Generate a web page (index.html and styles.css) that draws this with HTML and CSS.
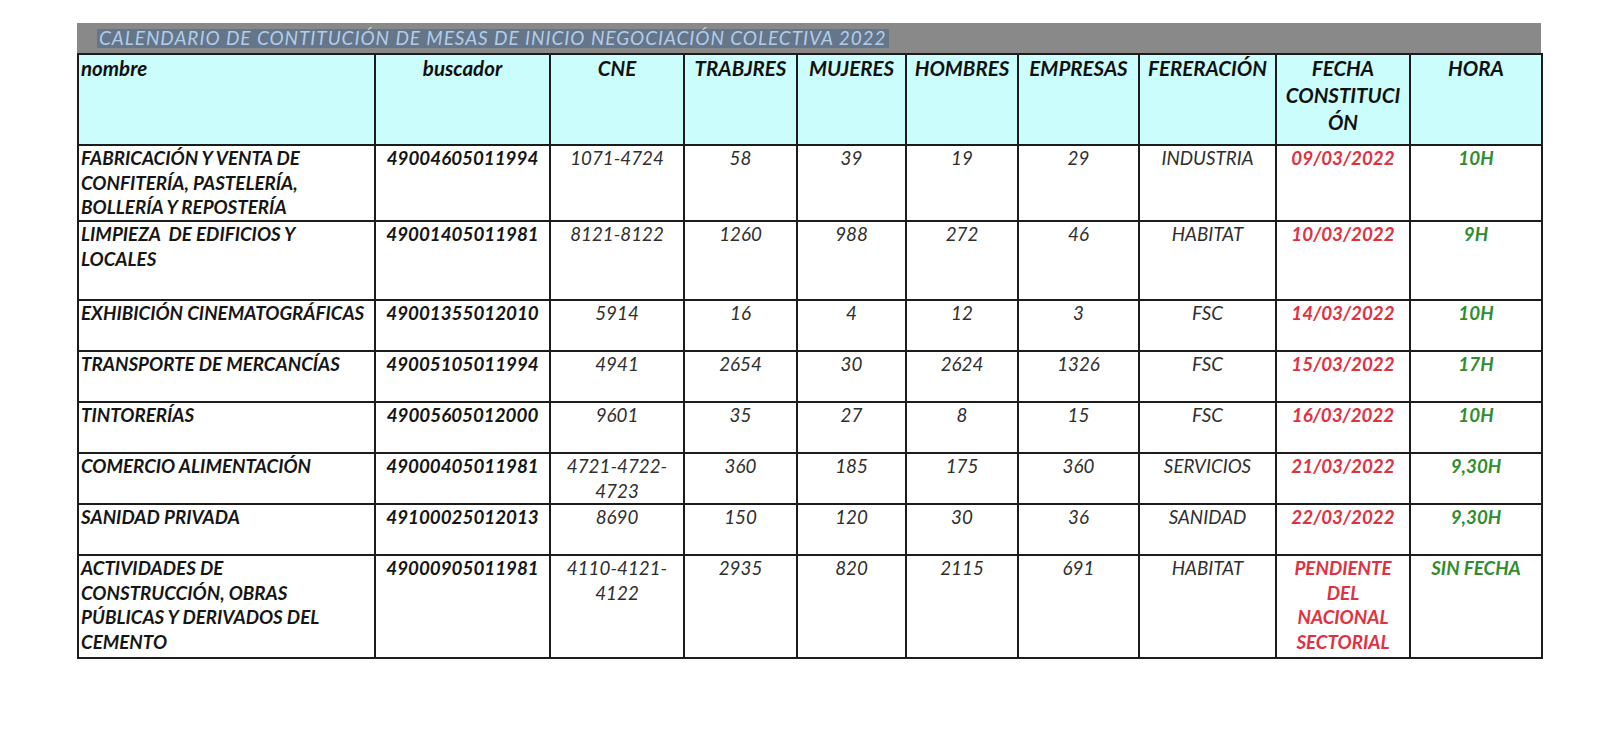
FILE: index.html
```html
<!DOCTYPE html>
<html lang="es">
<head>
<meta charset="utf-8">
<title>Calendario negociación colectiva 2022</title>
<link rel="stylesheet" href="styles.css">
</head>
<body>
<div class="sheet">
  <div class="title-bar"><span class="title">CALENDARIO DE CONTITUCIÓN DE MESAS DE INICIO NEGOCIACIÓN COLECTIVA 2022</span></div>
  <table class="grid">
    <colgroup>
      <col class="c-nombre"><col class="c-busc"><col class="c-cne"><col class="c-trab"><col class="c-muj"><col class="c-hom"><col class="c-emp"><col class="c-fed"><col class="c-fecha"><col class="c-hora">
    </colgroup>
    <thead>
      <tr class="r-head">
        <th class="left">nombre</th>
        <th>buscador</th>
        <th>CNE</th>
        <th>TRABJRES</th>
        <th>MUJERES</th>
        <th>HOMBRES</th>
        <th>EMPRESAS</th>
        <th>FERERACIÓN</th>
        <th>FECHA<br>CONSTITUCI<br>ÓN</th>
        <th>HORA</th>
      </tr>
    </thead>
    <tbody>
      <tr class="r1">
        <td class="name">FABRICACIÓN Y VENTA DE<br>CONFITERÍA, PASTELERÍA,<br>BOLLERÍA Y REPOSTERÍA</td>
        <td class="code">49004605011994</td>
        <td>1071-4724</td><td>58</td><td>39</td><td>19</td><td>29</td><td>INDUSTRIA</td>
        <td class="date">09/03/2022</td><td class="hour">10H</td>
      </tr>
      <tr class="r2">
        <td class="name">LIMPIEZA&nbsp; DE EDIFICIOS Y<br>LOCALES</td>
        <td class="code">49001405011981</td>
        <td>8121-8122</td><td>1260</td><td>988</td><td>272</td><td>46</td><td>HABITAT</td>
        <td class="date">10/03/2022</td><td class="hour">9H</td>
      </tr>
      <tr class="r3">
        <td class="name">EXHIBICIÓN CINEMATOGRÁFICAS</td>
        <td class="code">49001355012010</td>
        <td>5914</td><td>16</td><td>4</td><td>12</td><td>3</td><td>FSC</td>
        <td class="date">14/03/2022</td><td class="hour">10H</td>
      </tr>
      <tr class="r3">
        <td class="name">TRANSPORTE DE MERCANCÍAS</td>
        <td class="code">49005105011994</td>
        <td>4941</td><td>2654</td><td>30</td><td>2624</td><td>1326</td><td>FSC</td>
        <td class="date">15/03/2022</td><td class="hour">17H</td>
      </tr>
      <tr class="r3">
        <td class="name">TINTORERÍAS</td>
        <td class="code">49005605012000</td>
        <td>9601</td><td>35</td><td>27</td><td>8</td><td>15</td><td>FSC</td>
        <td class="date">16/03/2022</td><td class="hour">10H</td>
      </tr>
      <tr class="r3">
        <td class="name">COMERCIO ALIMENTACIÓN</td>
        <td class="code">49000405011981</td>
        <td>4721-4722-<br>4723</td><td>360</td><td>185</td><td>175</td><td>360</td><td>SERVICIOS</td>
        <td class="date">21/03/2022</td><td class="hour">9,30H</td>
      </tr>
      <tr class="r3">
        <td class="name">SANIDAD PRIVADA</td>
        <td class="code">49100025012013</td>
        <td>8690</td><td>150</td><td>120</td><td>30</td><td>36</td><td>SANIDAD</td>
        <td class="date">22/03/2022</td><td class="hour">9,30H</td>
      </tr>
      <tr class="r8">
        <td class="name">ACTIVIDADES DE<br>CONSTRUCCIÓN, OBRAS<br>PÚBLICAS Y DERIVADOS DEL<br>CEMENTO</td>
        <td class="code">49000905011981</td>
        <td>4110-4121-<br>4122</td><td>2935</td><td>820</td><td>2115</td><td>691</td><td>HABITAT</td>
        <td class="date">PENDIENTE<br>DEL<br>NACIONAL<br>SECTORIAL</td><td class="hour">SIN FECHA</td>
      </tr>
    </tbody>
  </table>
</div>
</body>
</html>
```

FILE: styles.css
```css
html, body {
  margin: 0;
  padding: 0;
  background: #ffffff;
}

body {
  font-family: Lato, "Open Sans", "Liberation Sans", sans-serif;
  font-style: italic;
  color: #2e2e2e;
}

.sheet {
  padding: 23px 0 0 77px;
  width: 1464px;
}

.title-bar {
  height: 30px;
  width: 1464px;
  background: #898989;
  display: flex;
  align-items: center;
  padding-left: 20px;
  box-sizing: border-box;
}

.title {
  font-size: 19px;
  line-height: 18px;
  color: #b3cde8;
  background: #65758a;
  padding: 0 2px 1px;
  letter-spacing: 0.95px;
  white-space: nowrap;
}

.grid {
  border-collapse: collapse;
  table-layout: fixed;
  width: 1464px;
  font-size: 18.8px;
  line-height: 24.5px;
}

.c-nombre { width: 297px; }
.c-busc { width: 175px; }
.c-cne { width: 134px; }
.c-trab { width: 113px; }
.c-muj { width: 109px; }
.c-hom { width: 112px; }
.c-emp { width: 121px; }
.c-fed { width: 137px; }
.c-fecha { width: 134px; }
.c-hora { width: 132px; }

.grid th,
.grid td {
  border: 2px solid #1c1c1c;
  vertical-align: top;
  text-align: center;
  padding: 0 2px;
  overflow: hidden;
  white-space: nowrap;
}

.grid th {
  background: #ccfdfd;
  font-weight: 700;
  font-size: 20.5px;
  color: #111;
  padding-top: 0;
  line-height: 27px;
}

.grid th.left { text-align: left; }

.r-head { height: 91px; }
.r1 { height: 76px; }
.r2 { height: 79px; }
.r3 { height: 51px; }
.r8 { height: 103px; }

.grid td.name {
  text-align: left;
  font-weight: 700;
  color: #151515;
}

.grid td.code {
  font-weight: 700;
  color: #151515;
}

.grid td.date {
  font-weight: 700;
  color: #e2303f;
}

.grid td.hour {
  font-weight: 700;
  color: #2f8d2f;
}
```
